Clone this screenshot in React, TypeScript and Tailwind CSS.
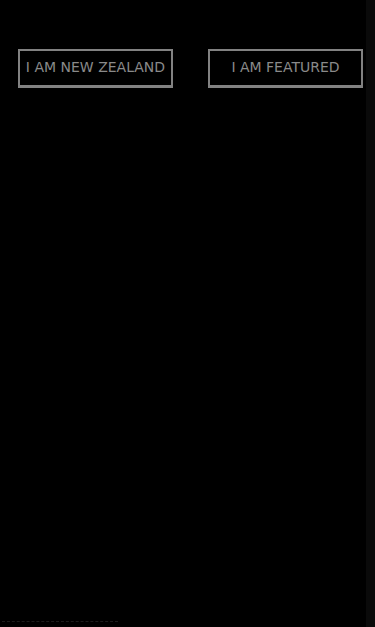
export default function App() {
  return (
    <div
      className="flex h-[627px] w-full bg-black"
      style={{ fontFamily: '"DejaVu Sans", sans-serif' }}
    >
      <div className="flex flex-1 flex-col">
        <div className="flex gap-[35px] pl-[18px] pt-[49px]">
          <button className="flex h-[39px] w-[155px] items-center justify-center border-2 border-b-[3px] border-[#828282] pb-[2px] text-[14px] text-[#8a8a8a]">
            I AM NEW ZEALAND
          </button>
          <button className="flex h-[39px] w-[155px] items-center justify-center border-2 border-b-[3px] border-[#828282] pb-[2px] text-[14px] text-[#8a8a8a]">
            I AM FEATURED
          </button>
        </div>
        <div className="mt-auto mb-[5px] ml-[2px] w-[116px] border-b border-dashed border-[#1c1c1c]" />
      </div>
      <div className="w-[9px] bg-[#0a0a0a]" />
    </div>
  );
}
